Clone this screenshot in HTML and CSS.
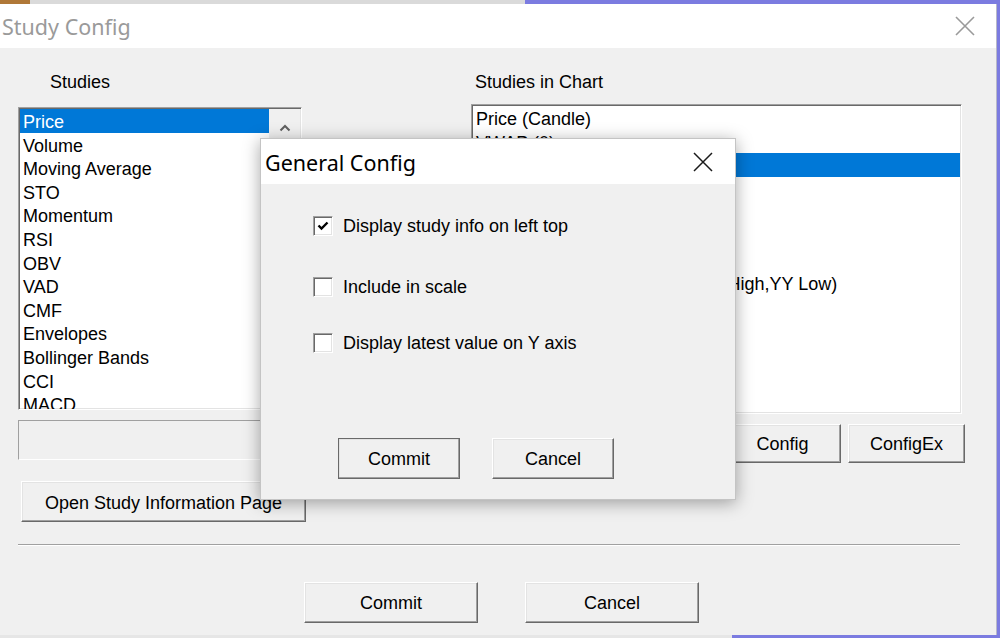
FILE: index.html
```html
<!DOCTYPE html>
<html lang="en">
<head>
    <meta charset="UTF-8">
    <title>Study Config</title>
    <link rel="stylesheet" href="styles.css">
</head>
<body>
    <div class="desktop">
        <div class="window main-window">
            <div class="titlebar">
                <span class="title">Study Config</span>
                <svg class="close-icon" width="20" height="20" viewBox="0 0 20 20">
                    <path d="M1 1 L19 19 M19 1 L1 19" stroke="#9a9a9a" stroke-width="1.6" fill="none"/>
                </svg>
            </div>
            <div class="window-body">
                <div class="columns">
                    <div class="col col-left">
                        <div class="label">Studies</div>
                        <div class="listbox studies-list">
                            <ul class="items">
                                <li class="selected">Price</li>
                                <li>Volume</li>
                                <li>Moving Average</li>
                                <li>STO</li>
                                <li>Momentum</li>
                                <li>RSI</li>
                                <li>OBV</li>
                                <li>VAD</li>
                                <li>CMF</li>
                                <li>Envelopes</li>
                                <li>Bollinger Bands</li>
                                <li>CCI</li>
                                <li>MACD</li>
                            </ul>
                            <div class="scrollbar">
                                <div class="scroll-arrow">
                                    <svg width="12" height="8" viewBox="0 0 12 8">
                                        <path d="M1.5 6.5 L6 2 L10.5 6.5" stroke="#606060" stroke-width="2" fill="none"/>
                                    </svg>
                                </div>
                            </div>
                        </div>
                        <div class="infobox"></div>
                        <button class="btn open-info">Open Study Information Page</button>
                    </div>
                    <div class="col col-right">
                        <div class="label">Studies in Chart</div>
                        <div class="listbox chart-list">
                            <ul class="items">
                                <li>Price (Candle)</li>
                                <li>VWAP (0)</li>
                                <li class="selected">Volume</li>
                                <li>SMA (5)</li>
                                <li>SMA (20)</li>
                                <li>SMA (60)</li>
                                <li>Bollinger</li>
                                <li>Yesterday Lines (YY Close, YY High,YY Low)</li>
                            </ul>
                        </div>
                        <div class="btn-row">
                            <button class="btn config-btn">Config</button>
                            <button class="btn config-btn">ConfigEx</button>
                        </div>
                    </div>
                </div>
                <div class="separator"></div>
                <div class="footer-buttons">
                    <button class="btn footer-btn">Commit</button>
                    <button class="btn footer-btn">Cancel</button>
                </div>
            </div>
        </div>

        <div class="window dialog">
            <div class="titlebar dialog-titlebar">
                <span class="title">General Config</span>
                <svg class="close-icon" width="20" height="20" viewBox="0 0 20 20">
                    <path d="M1 1 L19 19 M19 1 L1 19" stroke="#1a1a1a" stroke-width="1.5" fill="none"/>
                </svg>
            </div>
            <div class="dialog-body">
                <div class="options">
                    <label class="option">
                        <span class="checkbox">
                            <svg width="12" height="10" viewBox="0 0 12 10">
                                <path d="M1.5 4.5 L4.5 7.5 L10.5 1.5" stroke="#000" stroke-width="2.4" fill="none"/>
                            </svg>
                        </span>
                        Display study info on left top
                    </label>
                    <label class="option option-scale">
                        <span class="checkbox"></span>
                        Include in scale
                    </label>
                    <label class="option option-yaxis">
                        <span class="checkbox"></span>
                        Display latest value on Y axis
                    </label>
                </div>
                <div class="dialog-buttons">
                    <button class="btn dialog-btn default">Commit</button>
                    <button class="btn dialog-btn">Cancel</button>
                </div>
            </div>
        </div>
    </div>
</body>
</html>
```

FILE: styles.css
```css
:root {
    --face: #f0f0f0;
    --shadow: #a0a0a0;
    --dark-shadow: #696969;
    --light: #e3e3e3;
    --highlight: #ffffff;
    --select: #0078d7;
    --chart-bg: #7b7be0;
}

body {
    margin: 0;
    padding: 0;
    font-family: "Liberation Sans", Arial, sans-serif;
}

.desktop {
    position: relative;
    width: 1000px;
    height: 638px;
    overflow: hidden;
    background:
        linear-gradient(to right, #b07838 0 30px, #dadada 30px 525px, var(--chart-bg) 525px) top / 100% 4px no-repeat,
        linear-gradient(to right, #e6e6e6 0 732px, var(--chart-bg) 732px) bottom / 100% 3px no-repeat,
        var(--chart-bg);
}

.window {
    position: absolute;
    box-sizing: border-box;
    background-color: var(--face);
}

.main-window {
    left: 0;
    top: 4px;
    width: 997px;
    height: 631px;
    border-right: 1px solid #b8b8c8;
}

.titlebar {
    height: 44px;
    background-color: #fff;
    display: flex;
    align-items: center;
    justify-content: space-between;
    padding: 0 21px 0 2px;
}

.title {
    font-family: "Noto Sans", sans-serif;
    font-size: 21.5px;
    padding-top: 1px;
    color: #9a9a9a;
}

.close-icon {
    display: block;
}

.window-body {
    padding: 24px 0 0 18px;
}

.columns {
    display: flex;
    align-items: flex-start;
}

.col-left {
    width: 288px;
}

.col-right {
    margin-left: 165px;
    width: 494px;
}

.label {
    font-size: 18px;
    line-height: 21px;
    color: #000;
}

.col-left .label {
    margin-left: 32px;
}

.col-right .label {
    margin-left: 4px;
}

.listbox {
    box-sizing: border-box;
    background-color: #fff;
    border: 1px solid;
    border-color: var(--shadow) var(--highlight) var(--highlight) var(--shadow);
    box-shadow: inset 1px 1px 0 var(--dark-shadow), inset -1px -1px 0 var(--light);
    padding: 1px;
    overflow: hidden;
}

.studies-list {
    margin-top: 14px;
    width: 284px;
    height: 303px;
    display: flex;
}

.chart-list {
    margin-top: 11px;
    width: 491px;
    height: 310px;
}

.items {
    list-style: none;
    margin: 0;
    padding: 0;
    flex: 1;
    min-width: 0;
}

.items li {
    font-size: 18px;
    line-height: 20.6px;
    padding: 3px 0 0 3px;
    white-space: nowrap;
    color: #000;
}

.items li.selected {
    background-color: var(--select);
    color: #fff;
}

.scrollbar {
    width: 31px;
    background-color: var(--face);
}

.scroll-arrow {
    height: 37px;
    display: flex;
    align-items: center;
    justify-content: center;
}

.infobox {
    margin-top: 10px;
    width: 284px;
    height: 40px;
    box-sizing: border-box;
    border: 1px solid;
    border-color: var(--shadow) var(--highlight) var(--highlight) var(--shadow);
}

.btn {
    box-sizing: border-box;
    font-family: "Liberation Sans", Arial, sans-serif;
    font-size: 18px;
    color: #000;
    background-color: var(--face);
    border: 1px solid;
    border-color: var(--highlight) var(--dark-shadow) var(--dark-shadow) var(--highlight);
    box-shadow: inset -1px -1px 0 var(--shadow), inset 1px 1px 0 var(--light);
    padding: 2px 0 0;
    cursor: pointer;
}

.open-info {
    display: block;
    margin: 21px 0 0 3px;
    width: 285px;
    height: 41px;
    padding-top: 3px;
}

.btn-row {
    margin-top: 10px;
    display: flex;
    justify-content: flex-end;
    gap: 7px;
}

.config-btn {
    width: 117px;
    height: 39px;
}

.separator {
    margin-top: 22px;
    width: 942px;
    border-top: 1px solid var(--shadow);
    border-bottom: 1px solid var(--highlight);
}

.footer-buttons {
    display: flex;
    gap: 47px;
    margin: 36px 0 0 286px;
}

.footer-btn {
    width: 174px;
    height: 41px;
}

/* General Config dialog */
.dialog {
    left: 260px;
    top: 138px;
    width: 476px;
    height: 362px;
    border: 1px solid #c4c4c4;
    box-shadow: 0 3px 16px rgba(0, 0, 0, 0.35);
}

.dialog-titlebar {
    height: 45px;
    padding: 0 22px 0 4px;
}

.dialog-titlebar .title {
    color: #000;
}

.dialog-body {
    padding: 32px 0 0 52px;
}

.options {
    display: flex;
    flex-direction: column;
}

.option {
    display: flex;
    align-items: center;
    gap: 10px;
    height: 20px;
    font-size: 18px;
    color: #000;
}

.option-scale {
    margin-top: 41px;
}

.option-yaxis {
    margin-top: 36px;
}

.checkbox {
    box-sizing: border-box;
    width: 20px;
    height: 20px;
    background-color: #fff;
    border: 1px solid;
    border-color: var(--shadow) var(--highlight) var(--highlight) var(--shadow);
    box-shadow: inset 1px 1px 0 var(--dark-shadow), inset -1px -1px 0 var(--light);
    display: flex;
    align-items: center;
    justify-content: center;
}

.dialog-buttons {
    display: flex;
    gap: 32px;
    margin: 85px 0 0 25px;
}

.dialog-btn {
    width: 122px;
    height: 41px;
}

.dialog-btn.default {
    border-color: var(--dark-shadow);
}
```
